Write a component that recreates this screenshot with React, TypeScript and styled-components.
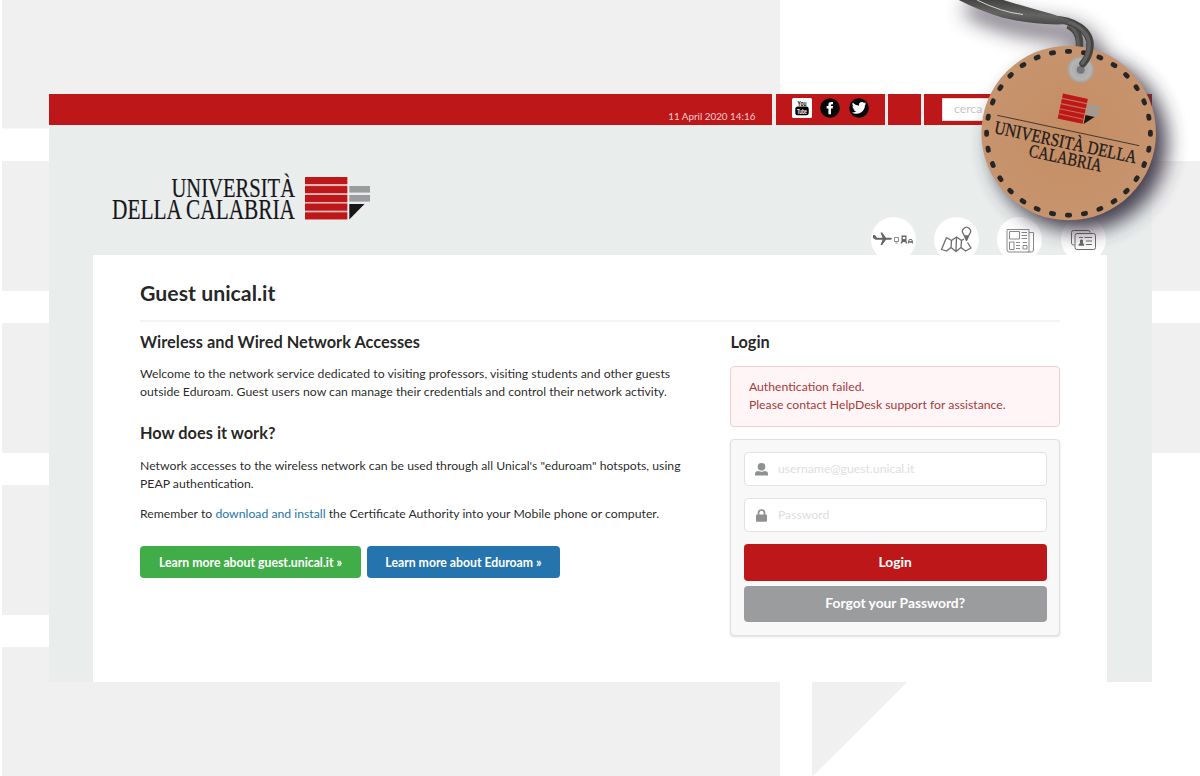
import React from "react";
import styled, { createGlobalStyle } from "styled-components";

const Global = createGlobalStyle`
  * { box-sizing: border-box; }
  body { margin: 0; background: #fff; font-family: Lato, sans-serif; font-size: 12.24px; line-height: 18px; color: rgba(0,0,0,.87); }
  h1, h2, p { margin: 0; }
`;

const Page = styled.div`
  position: relative;
  height: 776px;
  overflow: hidden;
  padding: 94px 48.5px;
`;
const Backdrop = styled.svg`
  position: absolute;
  left: 0;
  top: 0;
`;
const Site = styled.div`
  position: relative;
  height: 588.4px;
  background: #e9eeed;
  display: flex;
  flex-direction: column;
`;
const TopBar = styled.div`
  display: flex;
  gap: 3.7px;
  height: 31px;
  flex: none;
`;
const BarCell = styled.div<{ $w?: number }>`
  ${(p) => (p.$w ? `width: ${p.$w}px;` : "flex: 1;")}
  background: #be1719;
  display: flex;
  align-items: center;
`;
const DateText = styled.span`
  margin-left: auto;
  padding: 13px 16.5px 0 0;
  color: #f3d0d0;
  font-size: 9.85px;
`;
const Social = styled.div`
  display: flex;
  gap: 8.5px;
  padding: 0 0 3px 16px;
`;
const Search = styled.div`
  margin-left: 17.5px;
  width: 160px;
  height: 23px;
  background: #fff;
  border: 1px solid #ddd;
  padding: 1px 11px;
  color: #c6c6c6;
`;
const Header = styled.header`
  height: 130px;
  flex: none;
  display: flex;
  justify-content: space-between;
  padding: 0 46px 0 63.5px;
`;
const LogoArt = styled.svg`
  margin-top: 43px;
  flex: none;
`;
const Shortcuts = styled.div`
  display: flex;
  align-items: flex-start;
  gap: 18.2px;
  margin-top: 92px;
  height: 38px;
  overflow: hidden;
`;
const Shortcut = styled.div`
  width: 45px;
  height: 45px;
  border-radius: 50%;
  background: #fff;
`;
const Content = styled.main`
  flex: 1;
  margin: 0 44.5px;
  background: #fff;
  padding: 24px 47px 0;
`;
const Title = styled.h1`
  font-size: 21.3px;
  line-height: 28px;
  font-weight: 700;
  padding-bottom: 13px;
  border-bottom: 2px solid #f4f4f4;
`;
const Columns = styled.div`
  display: grid;
  grid-template-columns: 560px 329.6px;
  justify-content: space-between;
  padding-top: 9px;
`;
const Heading = styled.h2<{ $gap?: number }>`
  font-size: 16.35px;
  line-height: 22px;
  font-weight: 700;
  margin-top: ${(p) => p.$gap || 0}px;
`;
const Para = styled.p<{ $gap?: number }>`
  margin-top: ${(p) => p.$gap || 12}px;
  white-space: nowrap;
`;
const Link = styled.a`
  color: #2574ad;
`;
const Actions = styled.div`
  display: flex;
  gap: 6px;
  margin-top: 23px;
`;
const Button = styled.button<{ $bg: string; $w: number }>`
  width: ${(p) => p.$w}px;
  height: 32px;
  border: 0;
  padding: 0;
  border-radius: 4px;
  background: ${(p) => p.$bg};
  color: #fff;
  font: 700 12.25px Lato, sans-serif;
`;
const Alert = styled.div`
  margin-top: 13px;
  height: 61px;
  border-radius: 4px;
  border: 1px solid #efcfd0;
  background: #fff5f6;
  color: #a63a3a;
  padding: 11px 17.5px;
`;
const Panel = styled.form`
  margin-top: 12px;
  height: 197px;
  padding: 12px 12.5px;
  border-radius: 4px;
  border: 1px solid #dfe0e0;
  background: #f8f8f8;
  box-shadow: 0 1px 2px rgba(34,36,38,.15);
  display: flex;
  flex-direction: column;
`;
const Field = styled.div`
  height: 34px;
  flex: none;
  margin-bottom: 12px;
  border: 1px solid #e1e1e2;
  border-radius: 4px;
  background: #fff;
  display: flex;
  align-items: center;
  gap: 10px;
  padding-left: 10px;
  color: #dedede;
`;
const Submit = styled.button<{ $bg: string; $h: number }>`
  height: ${(p) => p.$h}px;
  flex: none;
  margin-bottom: 5px;
  border: 0;
  border-radius: 4px;
  background: ${(p) => p.$bg};
  color: #fff;
  font: 700 13.8px Lato, sans-serif;
  padding: 0 0 3px;
`;
const Tag = styled.svg`
  position: absolute;
  left: 940px;
  top: 0;
`;

const Emblem = () => (
  <>
    <rect width="42.3" height="42.4" fill="#be1719" opacity=".25" />
    {[0, 9.1, 18, 26.6, 35.4].map((y) => (
      <rect key={y} x="0" y={y} width="42.3" height="7" fill="#be1719" />
    ))}
    <rect x="44.3" y="9" width="20.7" height="6.6" fill="#9b9c9e" />
    <rect x="44.3" y="18" width="20.7" height="6.6" fill="#9b9c9e" />
    <path d="M44.3 27H59.5L44.3 42.5Z" fill="#17151a" />
  </>
);

const SERIF = "Liberation Serif, serif";

export default function App() {
  return (
    <Page>
      <Global />
      <Backdrop width="1200" height="776" fill="#f0f0f0">
        <path d="M2 0H780V128.5H2ZM2 161H780V291H2ZM2 323H780V453H2ZM2 485H780V615H2ZM2 647H780V776H2ZM812 161H1200V291H812ZM812 323H1200V453H812ZM812 485H1105L812 777Z" />
      </Backdrop>
      <Site>
        <TopBar>
          <BarCell $w={723.4}>
            <DateText>11 April 2020 14:16</DateText>
          </BarCell>
          <BarCell $w={109}>
            <Social>
              <svg width="20" height="20" viewBox="0 0 20 20">
                <rect width="20" height="20" rx="1.5" fill="#fff" />
                <text x="10" y="7.8" textAnchor="middle" fontFamily="Liberation Sans, sans-serif" fontWeight="700" fontSize="7" textLength="9" lengthAdjust="spacingAndGlyphs">You</text>
                <rect x="3.3" y="8.5" width="13.4" height="8.8" rx="2.5" />
                <text x="10" y="15.6" textAnchor="middle" fontFamily="Liberation Sans, sans-serif" fontWeight="700" fontSize="6.5" fill="#fff" textLength="10" lengthAdjust="spacingAndGlyphs">Tube</text>
              </svg>
              <svg width="20" height="20" viewBox="0 0 20 20">
                <circle cx="10" cy="10" r="9.8" fill="#080606" />
                <path d="M8.4 16.2V10.5H6.6V8H8.4V6.7C8.4 4.7 9.5 3.9 11.1 3.9H13V6.3H11.8C11.2 6.3 11 6.6 11 7.1V8H13L12.7 10.5H11V16.2Z" fill="#fff" />
              </svg>
              <svg width="20" height="20" viewBox="0 0 20 20">
                <circle cx="10" cy="10" r="9.8" fill="#080606" />
                <g transform="translate(2.8 2.6) scale(.61)">
                  <path fill="#fff" d="M23.95 4.57a10 10 0 0 1-2.82.77 4.96 4.96 0 0 0 2.16-2.72c-.95.55-2 .95-3.13 1.18a4.92 4.92 0 0 0-8.38 4.48C7.69 8.1 4.07 6.13 1.64 3.16a4.82 4.82 0 0 0-.67 2.48c0 1.7.87 3.2 2.19 4.08a4.9 4.9 0 0 1-2.23-.61v.06a4.92 4.92 0 0 0 3.95 4.83 4.99 4.99 0 0 1-2.21.08 4.94 4.94 0 0 0 4.6 3.42A9.87 9.87 0 0 1 0 19.54a14 14 0 0 0 7.55 2.21c9.05 0 14-7.5 14-13.98 0-.21 0-.42-.02-.63a9.94 9.94 0 0 0 2.46-2.55z" />
                </g>
              </svg>
            </Social>
          </BarCell>
          <BarCell $w={32.5} />
          <BarCell>
            <Search>cerca</Search>
          </BarCell>
        </TopBar>
        <Header>
          <LogoArt width="262" height="60" fontFamily={SERIF} fill="#17151a" stroke="#17151a" strokeWidth=".2">
            <text x="59.5" y="28.5" fontSize="27.5" textLength="123.5" lengthAdjust="spacingAndGlyphs">UNIVERSITÀ</text>
            <text x="0" y="50.7" fontSize="28.5" textLength="183" lengthAdjust="spacingAndGlyphs">DELLA CALABRIA</text>
            <g transform="translate(193 9)" stroke="none"><Emblem /></g>
          </LogoArt>
          <Shortcuts>
            <Shortcut>
              <svg width="45" height="45" viewBox="0 0 45 45" fill="#666">
                <path d="M2 18H4L6 20.7H11.5L9.5 15.5H11.2L15 20.7H19.5L21.5 21.7L19.5 22.7H15L11.2 28H9.5L11.5 22.7H4.5L2 21Z" />
                <g fill="none" stroke="#888" strokeWidth="1">
                  <path d="M23.5 20.5H27.5V24.5H23.5ZM24.5 26H26.5" />
                </g>
                <path fillRule="evenodd" d="M30.5 18.5H35.5V24.5L36.5 26.5H35L34 25H32L31 26.5H29.5L30.5 24.5ZM31.8 20V22H34.2V20Z" />
                <path fillRule="evenodd" fill="#777" d="M37 26.5V24L38.3 22H40.7L42 24V26.5H41V25.7H38V26.5ZM38.2 24H40.8L40.2 22.9H38.8Z" />
              </svg>
            </Shortcut>
            <Shortcut>
              <svg width="45" height="45" viewBox="0 0 45 45" fill="none" stroke="#6c6c6c" strokeWidth="1.3" strokeLinejoin="round">
                <path d="M12.5 20.5L7.5 32.5L12.5 34L17 30.5L22 34.5L27 30.5L31.5 34L37 31L33.5 25.5M12.5 20.5L17.5 23.5L22.5 20L27.5 23.5L30 22M17.5 23.5L17 30.5M22.5 20L22 34.5M27.5 23.5L27 30.5" />
                <path d="M32.5 23.5L29.5 17A4 4 0 1 1 35.5 17Z" />
                <path d="M31 19L32.5 23L34 19Z" fill="#666" />
              </svg>
            </Shortcut>
            <Shortcut>
              <svg width="45" height="45" viewBox="0 0 45 45" fill="none" stroke="#888">
                <path d="M10 12.5H32V35H12Q10 35 10 33ZM32 15.5H36.5V33Q36.5 35 34 35H31" />
                <path d="M12.5 14.5H22.5V22H12.5ZM24.5 15.5H30M24.5 18.5H30M24.5 21.5H30M12.5 25H17V32.5H12.5ZM19 25.5H23M19 28.5H23M19 31.5H23M25.5 25.5H30M26 28.5H30V32H26Z" />
              </svg>
            </Shortcut>
            <Shortcut>
              <svg width="45" height="45" viewBox="0 0 45 45" fill="none" stroke="#6c6c6c">
                <path d="M13.5 28H12.5Q10.5 28 10.5 26V15.5Q10.5 13.5 12.5 13.5H27Q29 13.5 29 15.5" />
                <rect x="14" y="16.5" width="20.5" height="16" rx="2" />
                <path d="M23.5 20.5H31M18 20.5H22M25 24H31M25 27.5H31M17.5 28H23" />
                <path d="M19.5 23H21.5V26L23 28H18L19.5 26Z" fill="#666" />
              </svg>
            </Shortcut>
          </Shortcuts>
        </Header>
        <Content>
          <Title>Guest unical.it</Title>
          <Columns>
            <section>
              <Heading>Wireless and Wired Network Accesses</Heading>
              <Para>
                Welcome to the network service dedicated to visiting professors, visiting students and other guests
                <br />
                outside Eduroam. Guest users now can manage their credentials and control their network activity.
              </Para>
              <Heading $gap={21}>How does it work?</Heading>
              <Para $gap={13}>
                Network accesses to the wireless network can be used through all Unical's "eduroam" hotspots, using
                <br />
                PEAP authentication.
              </Para>
              <Para>
                Remember to <Link>download and install</Link> the Certificate Authority into your Mobile phone or computer.
              </Para>
              <Actions>
                <Button $bg="#41ad49" $w={221}>Learn more about guest.unical.it »</Button>
                <Button $bg="#2574ad" $w={193}>Learn more about Eduroam »</Button>
              </Actions>
            </section>
            <section>
              <Heading>Login</Heading>
              <Alert>
                Authentication failed.
                <br />
                Please contact HelpDesk support for assistance.
              </Alert>
              <Panel>
                <Field>
                  <svg width="13" height="13" viewBox="0 0 13 13" fill="#8e9091">
                    <ellipse cx="6.5" cy="3.8" rx="3.8" ry="3.8" />
                    <path d="M0 12.5V11Q0 8.3 3.5 8.1Q6.5 9.6 9.5 8.1Q13 8.3 13 11V12.5Z" />
                  </svg>
                  <span>username@guest.unical.it</span>
                </Field>
                <Field>
                  <svg width="13" height="13" viewBox="0 0 13 13">
                    <rect x="1" y="5.5" width="11" height="7.3" rx="1" fill="#8e9091" />
                    <path d="M3.5 6V4a3 3 0 0 1 6 0V6" fill="none" stroke="#8e9091" strokeWidth="1.7" />
                  </svg>
                  <span>Password</span>
                </Field>
                <Submit type="button" $bg="#be1719" $h={37}>Login</Submit>
                <Submit type="button" $bg="#9b9c9e" $h={36}>Forgot your Password?</Submit>
              </Panel>
            </section>
          </Columns>
        </Content>
      </Site>
      <Tag width="260" height="280" viewBox="940 0 260 280">
        <defs>
          <filter id="soft" x="-40%" y="-40%" width="180%" height="180%"><feGaussianBlur stdDeviation="10" /></filter>
          <radialGradient id="leather"><stop offset="0" stopColor="#c58d63" /><stop offset="1" stopColor="#c6946e" /></radialGradient>
          <radialGradient id="eyelet"><stop offset="0" stopColor="#a2a2a2" /><stop offset=".75" stopColor="#b5b5b3" /><stop offset="1" stopColor="#a5a19b" /></radialGradient>
          <linearGradient id="cord" x1="0" y1="0" x2="-.25" y2="1"><stop offset="0" stopColor="#444443" /><stop offset=".45" stopColor="#646463" /><stop offset="1" stopColor="#333332" /></linearGradient>
        </defs>
        <g filter="url(#soft)" opacity=".95">
          <circle cx="1079" cy="143" r="88" fill="#3a3545" />
          <path d="M968 6Q1005 26 1050 30Q1088 30 1098 62" fill="none" stroke="#6a6470" strokeWidth="18" />
        </g>
        <path d="M1068 25Q1081 31 1079.3 47" fill="none" stroke="#474746" strokeWidth="7.5" />
        <path d="M1068 25Q1079.500 31 1078 47" fill="none" stroke="#5d5d5c" strokeWidth="3" />
        <circle cx="1068.7" cy="133" r="87.3" fill="url(#leather)" />
        {Array.from({ length: 32 }, (_, i) => (
          <rect key={i} x="1065" y="48.9" width="7" height="4.8" rx="2.2" fill="#262626" transform={`rotate(${i * 11.25} 1068.5 133.2)`} />
        ))}
        <circle cx="1080.7" cy="69.5" r="13.2" fill="url(#eyelet)" />
        <circle cx="1080.7" cy="69.7" r="4" fill="#77757d" />
        <path d="M1048 19.500C1074 18 1091.500 31 1090 47Q1089 57 1083 63.500" fill="none" stroke="#444443" strokeWidth="7.4" strokeLinecap="round" />
        <path d="M1048 19.500C1073 18 1090.500 31 1089 47Q1088 56 1082.500 63" fill="none" stroke="#616160" strokeWidth="3.6" strokeLinecap="round" />
        <path d="M955 -2L997 -2Q1022 6 1052 14L1070 20Q1068 25 1056 24.500Q1028 24 1002 17.500Q975 9 955 -2Z" fill="url(#cord)" />
        <path d="M977 0Q1001 12 1023 14.5" fill="none" stroke="#d5d5d5" strokeWidth="1" />
        <g transform="translate(1063 93.6) rotate(12.1) scale(.6)"><Emblem /></g>
        <path d="M997.3 115.3L1139.3 145.7" stroke="#262223" strokeWidth=".8" />
        <g fontFamily={SERIF} fill="#1d1a1b" stroke="#1d1a1b" strokeWidth=".3">
          <text transform="translate(993.5 133) rotate(12.1)" fontSize="18.5" textLength="145" lengthAdjust="spacingAndGlyphs">UNIVERSITÀ DELLA</text>
          <text transform="translate(1028 156.3) rotate(12.1)" fontSize="18.5" textLength="74" lengthAdjust="spacingAndGlyphs">CALABRIA</text>
        </g>
      </Tag>
    </Page>
  );
}
